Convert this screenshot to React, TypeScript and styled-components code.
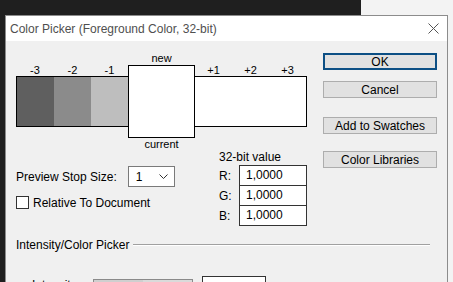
import styled, { createGlobalStyle } from 'styled-components';

const Global = createGlobalStyle`
  html, body {
    margin: 0;
    padding: 0;
    background: #1f1f1f;
    overflow: hidden;
  }
  body {
    font-family: 'Liberation Sans', Arial, sans-serif;
    font-size: 12px;
    color: #000;
  }
`;

const Desktop = styled.div`
  position: relative;
  width: 453px;
  height: 282px;
  background: #1f1f1f;
  overflow: hidden;
`;

// window behind the dialog, top right corner
const BackWindow = styled.div`
  position: absolute;
  left: 361px;
  top: 0;
  right: 0;
  bottom: 0;
  background: #f3f3f3;
`;

const Dialog = styled.div`
  position: absolute;
  left: 5px;
  top: 15px;
  width: 443px;
  height: 280px;
  background: #f0f0f0;
  border: 1px solid #8c8c8c;
  box-sizing: border-box;
  display: flex;
  flex-direction: column;
`;

const TitleBar = styled.div`
  height: 25px;
  background: #fff;
  display: flex;
  align-items: center;
  justify-content: space-between;
  padding: 0 8px 0 4px;
  flex-shrink: 0;
`;

const Title = styled.span`
  color: #4f4f4f;
  font-size: 12px;
`;

const Body = styled.div`
  display: flex;
  padding: 11px 0 0 10px;
`;

const Main = styled.div`
  width: 297px;
  display: flex;
  flex-direction: column;
`;

const SwatchRow = styled.div`
  display: flex;
  align-items: flex-start;
`;

const Strip = styled.div`
  margin-top: 12px;
  display: flex;
  flex-direction: column;
`;

const StripLabels = styled.div`
  display: flex;
  height: 12px;
  line-height: 12px;
`;

const StripLabel = styled.span<{ $w: number }>`
  width: ${(p) => p.$w}px;
  text-align: center;
  font-size: 11px;
`;

const StripCells = styled.div<{ $side: 'left' | 'right' }>`
  display: flex;
  height: 51px;
  box-sizing: border-box;
  border: 1px solid #000;
  ${(p) => (p.$side === 'left' ? 'border-right: none;' : 'border-left: none;')}
`;

const Cell = styled.div<{ $w: number; $c: string }>`
  width: ${(p) => p.$w}px;
  background: ${(p) => p.$c};
`;

const Center = styled.div`
  display: flex;
  flex-direction: column;
  align-items: center;
  width: 67px;
`;

const CenterLabel = styled.span`
  height: 13px;
  line-height: 12px;
  font-size: 11px;
`;

const CenterBox = styled.div`
  width: 67px;
  height: 73px;
  box-sizing: border-box;
  border: 1px solid #000;
  background: #fff;
`;

const Lower = styled.div`
  display: flex;
`;

const Options = styled.div`
  width: 203px;
  padding-top: 15px;
  display: flex;
  flex-direction: column;
`;

const OptionRow = styled.div`
  display: flex;
  align-items: center;
  height: 21px;
`;

const SelectBox = styled.div`
  margin-left: 11px;
  width: 47px;
  height: 21px;
  box-sizing: border-box;
  border: 1px solid #7a7a7a;
  background: #fff;
  display: flex;
  align-items: center;
  justify-content: space-between;
  padding: 0 6px 0 7px;
`;

const CheckRow = styled.label`
  display: flex;
  align-items: center;
  margin-top: 9px;
  height: 13px;
`;

const CheckBox = styled.span`
  width: 13px;
  height: 13px;
  box-sizing: border-box;
  border: 1px solid #333;
  background: #fff;
  margin-right: 4px;
`;

const Values = styled.div`
  display: flex;
  flex-direction: column;
`;

const ValuesTitle = styled.div`
  height: 15px;
  line-height: 12px;
`;

const ValueRow = styled.div`
  display: flex;
  align-items: center;
  margin-top: -1px;
  &:first-of-type {
    margin-top: 0;
  }
`;

const ValueKey = styled.span`
  width: 20px;
`;

const ValueInput = styled.div`
  width: 68px;
  height: 21px;
  box-sizing: border-box;
  border: 1px solid #333;
  background: #fff;
  padding-left: 6px;
  line-height: 19px;
`;

const Lowerpane = styled.div`
  padding-left: 10px;
`;

const Section = styled.div`
  display: flex;
  align-items: center;
  margin-top: 12px;
  width: 414px;
  gap: 4px;
`;

const Rule = styled.div`
  flex: 1;
  height: 1px;
  background: #a0a0a0;
  border-bottom: 1px solid #fff;
`;

const IntensityRow = styled.div`
  display: flex;
  align-items: flex-start;
  margin-top: 18px;
  padding-left: 16px;
`;

const IntensityLabel = styled.span`
  margin-top: 8px;
`;

const SliderTrack = styled.div`
  margin-left: 13px;
  margin-top: 9px;
  width: 100px;
  height: 20px;
  box-sizing: border-box;
  border: 1px solid #8a8a8a;
  background: linear-gradient(to right, #cfcfcf 50%, #dadada 50%);
`;

const NumInput = styled.div`
  margin-left: 9px;
  margin-top: 6px;
  width: 64px;
  height: 20px;
  box-sizing: border-box;
  border: 1px solid #333;
  background: #fff;
  padding-left: 6px;
  line-height: 20px;
`;

const Buttons = styled.div`
  display: flex;
  flex-direction: column;
  padding-left: 10px;
  padding-top: 1px;
`;

const Button = styled.div<{ $primary?: boolean; $gap: number }>`
  margin-top: ${(p) => p.$gap}px;
  width: 114px;
  height: 17px;
  box-sizing: border-box;
  background: #e1e1e1;
  border: ${(p) => (p.$primary ? '2px solid #0c4f84' : '1px solid #adadad')};
  display: flex;
  align-items: center;
  justify-content: center;
  font-size: 12px;
`;

const left = [
  { l: '-3', w: 37, c: '#5f5f5f' },
  { l: '-2', w: 37, c: '#8b8b8b' },
  { l: '-1', w: 37, c: '#bebebe' },
];
const right = [
  { l: '+1', w: 37, c: '#fff' },
  { l: '+2', w: 37, c: '#fff' },
  { l: '+3', w: 37, c: '#fff' },
];

export default function App() {
  return (
    <Desktop>
      <Global />
      <BackWindow />
      <Dialog>
        <TitleBar>
          <Title>Color Picker (Foreground Color, 32-bit)</Title>
          <svg width="11" height="11" viewBox="0 0 11 11">
            <path d="M0.5 0.5 L10.5 10.5 M10.5 0.5 L0.5 10.5" stroke="#555" strokeWidth="1" />
          </svg>
        </TitleBar>
        <Body>
          <Main>
            <SwatchRow>
              <Strip>
                <StripLabels>
                  {left.map((s) => (
                    <StripLabel key={s.l} $w={s.w + (s.l === '-3' ? 1 : 0)}>{s.l}</StripLabel>
                  ))}
                </StripLabels>
                <StripCells $side="left">
                  {left.map((s) => (
                    <Cell key={s.l} $w={s.w} $c={s.c} />
                  ))}
                </StripCells>
              </Strip>
              <Center>
                <CenterLabel>new</CenterLabel>
                <CenterBox />
                <CenterLabel>current</CenterLabel>
              </Center>
              <Strip>
                <StripLabels>
                  {right.map((s) => (
                    <StripLabel key={s.l} $w={s.w}>{s.l}</StripLabel>
                  ))}
                </StripLabels>
                <StripCells $side="right">
                  {right.map((s) => (
                    <Cell key={s.l} $w={s.w} $c={s.c} />
                  ))}
                </StripCells>
              </Strip>
            </SwatchRow>
            <Lower>
              <Options>
                <OptionRow>
                  Preview Stop Size:
                  <SelectBox>
                    <span>1</span>
                    <svg width="9" height="5" viewBox="0 0 9 5">
                      <path d="M0.5 0.5 L4.5 4.5 L8.5 0.5" stroke="#333" fill="none" />
                    </svg>
                  </SelectBox>
                </OptionRow>
                <CheckRow>
                  <CheckBox />
                  Relative To Document
                </CheckRow>
              </Options>
              <Values>
                <ValuesTitle>32-bit value</ValuesTitle>
                {['R', 'G', 'B'].map((k) => (
                  <ValueRow key={k}>
                    <ValueKey>{k}:</ValueKey>
                    <ValueInput>1,0000</ValueInput>
                  </ValueRow>
                ))}
              </Values>
            </Lower>
          </Main>
          <Buttons>
            <Button $primary $gap={0}>OK</Button>
            <Button $gap={11}>Cancel</Button>
            <Button $gap={19}>Add to Swatches</Button>
            <Button $gap={17}>Color Libraries</Button>
          </Buttons>
        </Body>
        <Lowerpane>
          <Section>
            <span>Intensity/Color Picker</span>
            <Rule />
          </Section>
          <IntensityRow>
            <IntensityLabel>Intensity:</IntensityLabel>
            <SliderTrack />
            <NumInput>1,00</NumInput>
          </IntensityRow>
        </Lowerpane>
      </Dialog>
    </Desktop>
  );
}
